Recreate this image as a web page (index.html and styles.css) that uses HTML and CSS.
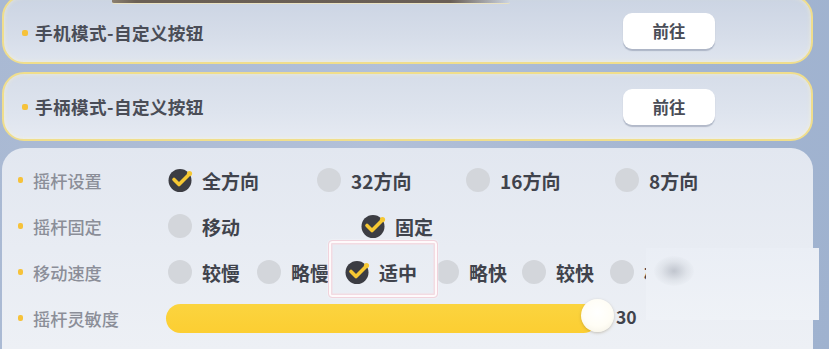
FILE: index.html
```html
<!DOCTYPE html>
<html lang="zh">
<head>
<meta charset="utf-8">
<title>按钮设置</title>
<link rel="stylesheet" href="styles.css">
</head>
<body>
<div class="screen">
  <div class="topbar"></div>

  <div class="card card-first">
    <div class="title"><span class="dot"></span>手机模式-自定义按钮</div>
    <button class="go">前往</button>
  </div>

  <div class="card card-second">
    <div class="title"><span class="dot"></span>手柄模式-自定义按钮</div>
    <button class="go">前往</button>
  </div>

  <div class="panel">
    <div class="row">
      <div class="label"><span class="ldot"></span>摇杆设置</div>
      <div class="opts opts-dir">
        <div class="opt"><svg class="check" viewBox="0 0 28 26"><circle cx="12" cy="13.5" r="11.5" fill="#3c3d43"/><polyline points="6,12.5 11,17.5 20.5,8" fill="none" stroke="#f6c833" stroke-width="3.6" stroke-linecap="round" stroke-linejoin="round"/><circle cx="21.5" cy="6.5" r="2.6" fill="#f6c833"/></svg><span>全方向</span></div>
        <div class="opt"><span class="radio"></span><span>32方向</span></div>
        <div class="opt"><span class="radio"></span><span>16方向</span></div>
        <div class="opt"><span class="radio"></span><span>8方向</span></div>
      </div>
    </div>
    <div class="row">
      <div class="label"><span class="ldot"></span>摇杆固定</div>
      <div class="opts opts-fix">
        <div class="opt"><span class="radio"></span><span>移动</span></div>
        <div class="opt"><svg class="check" viewBox="0 0 28 26"><circle cx="12" cy="13.5" r="11.5" fill="#3c3d43"/><polyline points="6,12.5 11,17.5 20.5,8" fill="none" stroke="#f6c833" stroke-width="3.6" stroke-linecap="round" stroke-linejoin="round"/><circle cx="21.5" cy="6.5" r="2.6" fill="#f6c833"/></svg><span>固定</span></div>
      </div>
    </div>
    <div class="row">
      <div class="label"><span class="ldot"></span>移动速度</div>
      <div class="opts opts-speed">
        <div class="opt"><span class="radio"></span><span>较慢</span></div>
        <div class="opt"><span class="radio"></span><span>略慢</span></div>
        <div class="opt"><svg class="check" viewBox="0 0 28 26"><circle cx="12" cy="13.5" r="11.5" fill="#3c3d43"/><polyline points="6,12.5 11,17.5 20.5,8" fill="none" stroke="#f6c833" stroke-width="3.6" stroke-linecap="round" stroke-linejoin="round"/><circle cx="21.5" cy="6.5" r="2.6" fill="#f6c833"/></svg><span>适中</span></div>
        <div class="opt"><span class="radio"></span><span>略快</span></div>
        <div class="opt"><span class="radio"></span><span>较快</span></div>
        <div class="opt"><span class="radio"></span><span>极快</span></div>
      </div>
    </div>
    <div class="row">
      <div class="label"><span class="ldot"></span>摇杆灵敏度</div>
      <div class="slider">
        <div class="track"><span class="knob"></span></div>
        <span class="val">30</span>
      </div>
    </div>

    <div class="highlight"></div>
    <div class="blur"><span class="blob"></span></div>
  </div>
</div>
</body>
</html>
```

FILE: styles.css
```css
* { box-sizing: border-box; }
html, body { margin: 0; padding: 0; }
body {
  width: 829px;
  height: 349px;
  overflow: hidden;
  font-family: "Noto Sans CJK SC", "Noto Sans", sans-serif;
  background: linear-gradient(100deg, #a9b9d3 0%, #b2c0d8 45%, #a3b5d1 80%, #9fb2cf 100%);
}
.screen {
  position: relative;
  width: 829px;
  height: 349px;
  padding-left: 2px;
  display: flex;
  flex-direction: column;
}
.topbar {
  position: absolute;
  left: 112px;
  top: 0;
  width: 398px;
  height: 4px;
  background: linear-gradient(90deg, #8c8070 0%, #6b6055 6%, #6a5f56 85%, rgba(106,95,86,0) 100%);
  border-bottom: 1.5px solid #e9e2c2;
  border-radius: 0 0 2px 2px;
  z-index: 3;
}
.card {
  width: 811px;
  height: 69px;
  border: 2.5px solid #f0de8c;
  border-radius: 22px;
  display: flex;
  align-items: center;
  justify-content: space-between;
  padding: 0 96px 0 18px;
  box-shadow: inset 0 0 4px rgba(255, 245, 200, 0.6);
}
.card-first {
  margin-top: -5px;
  background: linear-gradient(180deg, #cbd4e3 0%, #d6dde9 60%, #dfe5ef 100%);
}
.card-first .title { margin-top: 6px; }
.card-first .go { margin-top: 2px; }
.card-second {
  margin-top: 8px;
  background: linear-gradient(180deg, #d6dde9 0%, #dee4ee 60%, #e6eaf2 100%);
}
.title {
  display: flex;
  align-items: center;
  font-size: 17.6px;
  font-weight: 700;
  color: #4a4d57;
  letter-spacing: 0.4px;
}
.dot {
  width: 6px;
  height: 6px;
  border-radius: 2px;
  background: #f6c23a;
  margin-right: 7px;
}
.go {
  width: 92px;
  height: 36px;
  border: none;
  border-radius: 9px;
  background: #ffffff;
  box-shadow: 0 1.5px 1px rgba(90, 100, 130, 0.35);
  font-family: inherit;
  font-size: 16.5px;
  font-weight: 700;
  color: #4a4d57;
  padding: 0;
}
.panel {
  position: relative;
  margin-top: 7px;
  width: 811px;
  flex: 1;
  border-radius: 22px 22px 0 0;
  background: linear-gradient(180deg, #e2e7f0 0%, #e8ecf3 50%, #edf0f5 100%);
  padding: 9px 0 0 16px;
}
.row {
  height: 46px;
  display: flex;
  align-items: center;
}
.label {
  width: 150px;
  display: flex;
  align-items: center;
  font-size: 17.2px;
  font-weight: 500;
  color: #8b8e98;
}
.ldot {
  width: 5px;
  height: 6px;
  border-radius: 2px;
  background: #f6c23a;
  margin-right: 10px;
}
.opts { display: grid; }
.opts-dir { grid-template-columns: repeat(4, 149px); }
.opts-fix { grid-template-columns: repeat(2, 193px); }
.opts-speed { grid-template-columns: 89px 88px 90px 87px 88px 88px; }
.opt {
  display: flex;
  align-items: center;
  gap: 10px;
  font-size: 19px;
  font-weight: 700;
  color: #40434c;
  white-space: nowrap;
}
.radio {
  width: 24px;
  height: 24px;
  border-radius: 50%;
  background: #d3d6db;
  flex: none;
}
.check {
  width: 28px;
  height: 26px;
  margin-right: -4px;
  flex: none;
}
.slider {
  display: flex;
  align-items: center;
  margin-left: -2px;
}
.track {
  position: relative;
  width: 432px;
  height: 29px;
  border-radius: 15px;
  background: linear-gradient(180deg, #fbd43f 0%, #fcce32 100%);
}
.knob {
  position: absolute;
  right: -16px;
  top: -5px;
  width: 33px;
  height: 33px;
  border-radius: 50%;
  background: radial-gradient(circle at 50% 40%, #ffffff 0%, #fffdf5 55%, #f3efe2 100%);
  box-shadow: 0 1px 3px rgba(120, 100, 60, 0.35);
}
.val {
  margin-left: 18px;
  font-size: 17.5px;
  font-weight: 700;
  color: #40434c;
  margin-top: -3px;
}
.highlight {
  position: absolute;
  left: 326px;
  top: 92px;
  width: 110px;
  height: 58px;
  border-radius: 4px;
  border: 1.5px solid #f1d3dc;
  box-shadow: inset 0 0 0 2px rgba(255, 255, 255, 0.85), inset 0 0 0 3.5px #f3dbe2, 0 0 2px rgba(255,255,255,0.8);
}
.blur {
  position: absolute;
  left: 644px;
  top: 100px;
  width: 173px;
  height: 72px;
  background: linear-gradient(180deg, #eaeef5 0%, #eff2f7 100%);
  overflow: hidden;
}
.blob {
  position: absolute;
  left: 8px;
  top: 8px;
  width: 40px;
  height: 30px;
  border-radius: 50%;
  background: radial-gradient(ellipse at center, rgba(175, 180, 190, 0.7) 0%, rgba(200, 205, 212, 0.35) 45%, rgba(230, 234, 240, 0) 75%);
}
```
